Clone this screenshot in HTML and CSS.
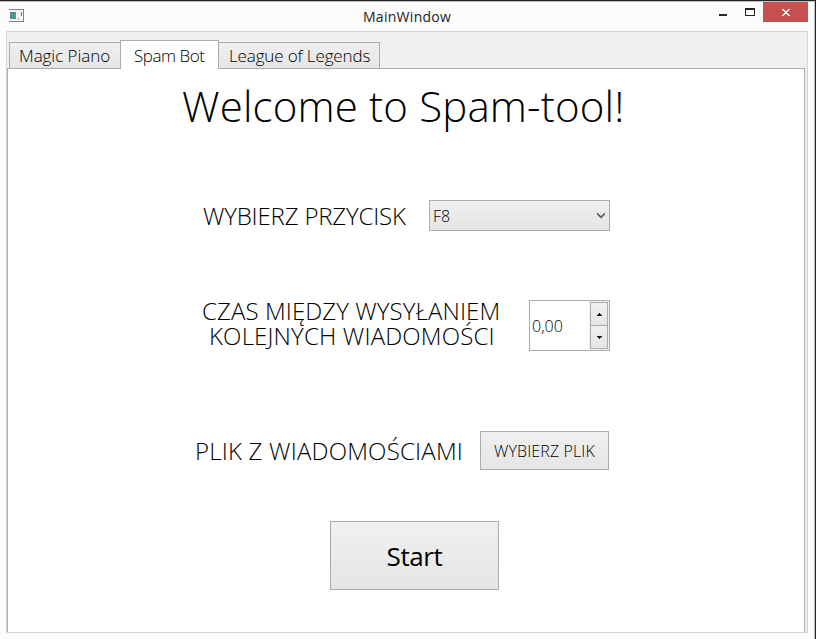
FILE: index.html
```html
<!DOCTYPE html>
<html lang="pl">
<head>
<meta charset="utf-8">
<title>MainWindow</title>
<link rel="stylesheet" href="styles.css">
</head>
<body>
<div class="window">
  <header class="titlebar">
    <svg class="app-icon" width="15" height="13" viewBox="0 0 15 13" shape-rendering="crispEdges">
      <rect width="15" height="13" fill="#a4a6a9"/>
      <path d="M0 0h15v1H0zM14 0h1v13h-1zM0 12h15v1H0z" fill="#7f8286"/>
      <rect x="0" y="1" width="14" height="11" fill="#f3f4f5"/>
      <rect x="1" y="3" width="6" height="7" fill="#5b83a8"/>
      <rect x="3" y="4" width="4" height="5" fill="#4b9a7c"/>
      <rect x="8" y="9" width="3" height="2" fill="#d0d2d4"/>
      <rect x="12" y="3" width="1" height="4" fill="#4f7f83"/>
    </svg>
    <span class="caption">MainWindow</span>
    <div class="controls">
      <svg class="glyphs" width="44" height="20" viewBox="0 0 44 20" shape-rendering="crispEdges">
        <path d="M0 12h8v2H0zM26 6h10v8H26zM27 8v5h8V8z" fill="#262626" fill-rule="evenodd"/>
      </svg>
      <button class="close" aria-label="Zamknij">
        <svg width="8" height="7" viewBox="0 0 8 7" shape-rendering="crispEdges"><path d="M0 0h2v1h1v1h2V1h1V0h2v1H7v1H6v1H5v1h1v1h1v1h1v1H6V6H5V5H3v1H2v1H0V6h1V5h1V4h1V3H2V2H1V1H0z" fill="#fff"/></svg>
      </button>
    </div>
  </header>
  <main class="client">
    <nav class="tabs">
      <button class="tab tab-piano"><span>Magic Piano</span></button>
      <button class="tab tab-spam active"><span>Spam Bot</span></button>
      <button class="tab tab-league"><span>League of Legends</span></button>
    </nav>
    <section class="panel">
      <h1><span>Welcome to Spam-tool!</span></h1>
      <div class="row key-row">
        <span class="label l-key">WYBIERZ PRZYCISK</span>
        <div class="select"><span>F8</span>
          <svg width="8" height="7" viewBox="0 0 8 7"><path d="M0 0.5L4 4L8 0.5V2.8L4 6.6L0 2.8z" fill="#606060"/></svg>
        </div>
      </div>
      <div class="row time-row">
        <div class="label two-line"><span class="l-time1">CZAS MIĘDZY WYSYŁANIEM</span><span class="l-time2">KOLEJNYCH WIADOMOŚCI</span></div>
        <div class="spinner"><span>0,00</span>
          <div class="steps">
            <button aria-label="Więcej"><svg width="5" height="3" viewBox="0 0 5 3" shape-rendering="crispEdges"><path d="M2 0h1v1h1v1h1v1H0V2h1V1h1z"/></svg></button>
            <button aria-label="Mniej"><svg width="5" height="3" viewBox="0 0 5 3" shape-rendering="crispEdges"><path d="M0 0h5v1H4v1H3v1H2V2H1V1H0z"/></svg></button>
          </div>
        </div>
      </div>
      <div class="row file-row">
        <span class="label l-file">PLIK Z WIADOMOŚCIAMI</span>
        <button class="btn choose"><span>WYBIERZ PLIK</span></button>
      </div>
      <button class="btn start"><span>Start</span></button>
    </section>
  </main>
</div>
</body>
</html>
```
FILE: styles.css
```css
* { box-sizing: border-box; }
body { margin: 0; background: #fcfcfc; font-family: "Open Sans", "Noto Sans", sans-serif; font-weight: 300; color: #000; }
button { font: inherit; color: inherit; padding: 0; margin: 0; border-radius: 0; }
span { white-space: nowrap; }
.window { width: 816px; height: 639px; overflow: hidden; border-top: 1px solid #262326; border-right: 1px solid #262326; box-shadow: inset -1px 1px #bdbdbd; background: #fcfcfc; }
.titlebar { height: 30px; display: flex; padding-left: 9px; padding-right: 7px; padding-top: 1px; }
.app-icon { margin-top: 7px; }
.caption { flex: 1; padding-left: 339px; font-size: 14px; line-height: 29px; font-weight: 400; letter-spacing: 0.28px; color: #222; }
.controls { display: flex; }
.close { width: 45px; height: 20px; border: 0; background: #c75050; display: flex; align-items: center; justify-content: center; }
.client { margin-left: 6px; width: 802px; height: 602px; border: 1px solid #d5d5d5; background: #f0f0f0; padding-top: 8px; }
.tabs { display: flex; align-items: flex-end; height: 29px; padding-left: 2px; margin-bottom: -1px; position: relative; }
.tab { height: 27px; border: 1px solid #acacac; background: linear-gradient(#f0f0f0, #e5e5e5); font-size: 17px; line-height: 25px; text-align: left; padding-left: 9px; }
.tab-piano { width: 111px; border-right: 0; letter-spacing: -0.05px; }
.tab-spam { width: 99px; padding-left: 13px; letter-spacing: -0.45px; }
.tab-league { width: 161px; border-left: 0; padding-left: 10px; letter-spacing: -0.13px; }
.tab.active { height: 29px; background: #fff; border-bottom: 0; }
.panel { width: 798px; height: 564px; border: 1px solid #acacac; border-bottom: 0; background: #fff; padding-top: 7px; }
h1 { margin: 0 0 0 174px; font-size: 42px; line-height: 60px; font-weight: 300; height: 124px; letter-spacing: 0.17px; }
.row { display: flex; align-items: center; justify-content: space-between; width: 414px; margin-left: 188px; }
.label { font-size: 24px; line-height: 25px; }
.l-key { letter-spacing: -0.17px; }
.key-row { height: 31px; padding-left: 7px; width: 414px; }
.select { width: 181px; height: 31px; border: 1px solid #acacac; background: linear-gradient(#f0f0f0, #e5e5e5); display: flex; align-items: center; justify-content: space-between; padding: 0 4px 0 3px; font-size: 16px; }
.time-row { height: 51px; margin-top: 69px; padding-left: 6px; }
.two-line { display: flex; flex-direction: column; margin-top: -5px; }
.l-time1 { letter-spacing: 0.1px; }
.l-time2 { padding-left: 7px; letter-spacing: 0.17px; }
.spinner { width: 81px; height: 51px; border: 1px solid #acacac; display: flex; align-items: center; justify-content: space-between; padding: 0 0 0 2px; font-size: 16px; }
.steps { width: 20px; height: 49px; padding: 1px; background: #f0f0f0; display: flex; flex-direction: column; }
.steps button { width: 18px; height: 24px; border: 1px solid #acacac; background: linear-gradient(#f0f0f0, #e5e5e5); display: flex; align-items: center; justify-content: center; }
.steps button + button { margin-top: -1px; }
.file-row { height: 39px; margin-top: 80px; margin-left: 187px; }
.l-file { letter-spacing: 0.2px; }
.btn { display: block; border: 1px solid #acacac; background: linear-gradient(#f0f0f0, #e5e5e5); text-align: center; }
.choose { width: 129px; height: 39px; font-size: 16px; letter-spacing: 0.12px; }
.start { width: 169px; height: 69px; margin: 51px 0 0 322px; font-size: 26px; font-weight: 400; letter-spacing: -0.4px; }
```
